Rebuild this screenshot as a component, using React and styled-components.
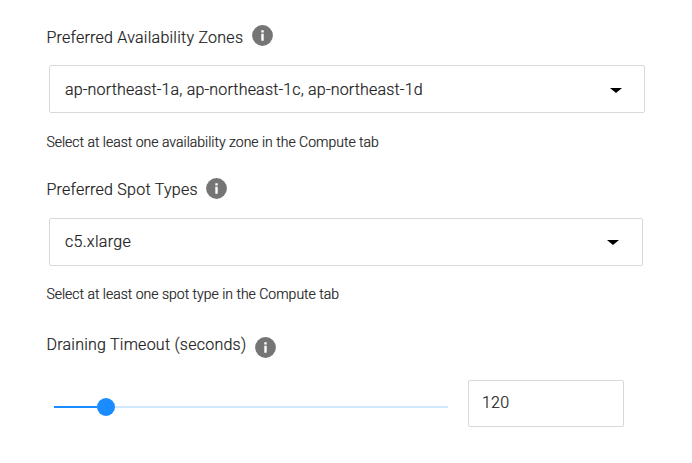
import React, { useState } from "react";
import styled, { createGlobalStyle } from "styled-components";

const GlobalStyle = createGlobalStyle`
  * { box-sizing: border-box; }
  body { margin: 0; background: #fff; }
`;

const Form = styled.main`
  display: flex;
  flex-direction: column;
  width: 692px;
  height: 463px;
  padding: 25px 0 0 46px;
  overflow: hidden;
  background: #fff;
  color: #212121;
  font-family: Roboto, "Liberation Sans", sans-serif;
  font-size: 16px;
  font-weight: 300;
  -webkit-text-stroke: 0.2px #212121;
`;

const Field = styled.section`
  display: flex;
  flex-direction: column;
  height: ${(p) => p.$height}px;
`;

const LabelRow = styled.div`
  display: flex;
  align-items: flex-start;
  justify-content: space-between;
  width: ${(p) => p.$width}px;
  height: 21px;
`;

const Label = styled.label`
  margin-top: ${(p) => p.$drop}px;
  padding-left: 0.4px;
  line-height: 20px;
  letter-spacing: ${(p) => p.$tracking}px;
  white-space: nowrap;
`;

const Icon = styled.svg`
  display: block;
  flex: none;
`;

const Select = styled.button`
  display: flex;
  align-items: center;
  justify-content: space-between;
  width: ${(p) => p.$width}px;
  height: 48px;
  margin: 19px 0 0 3px;
  padding: ${(p) => p.$padding};
  border: 1px solid #d9d9d9;
  border-radius: 2px;
  background: #fff;
  color: inherit;
  font: inherit;
  line-height: 20px;
  letter-spacing: ${(p) => p.$tracking}px;
  text-align: left;
`;

const Hint = styled.p`
  margin: ${(p) => p.$top}px 0 0;
  padding-left: 0.4px;
  font-size: 14px;
  line-height: 20px;
  letter-spacing: ${(p) => p.$tracking}px;
  white-space: nowrap;
`;

const SliderRow = styled.div`
  display: flex;
  align-items: center;
  gap: 20px;
  height: 47px;
  margin: 22px 0 0 8px;
`;

const Slider = styled.div`
  display: flex;
  align-items: center;
  width: 394px;
  height: 18px;
  margin-top: 7px;
`;

const Filled = styled.div`
  height: 2px;
  background: #1a8cff;
`;

const Thumb = styled.div`
  flex: none;
  width: 18px;
  height: 18px;
  border-radius: 50%;
  background: #1a8cff;
`;

const Track = styled.div`
  flex: 1;
  height: 2px;
  background: #d1e8ff;
`;

const NumberInput = styled.input`
  width: 156px;
  height: 47px;
  padding: 0 13px 2px;
  border: 1px solid #d9d9d9;
  border-radius: 2px;
  outline: none;
  background: #fff;
  color: inherit;
  font: inherit;
  letter-spacing: 0.2px;
`;

const InfoIcon = () => (
  <Icon width="21" height="21" viewBox="0 0 21 21">
    <circle cx="10.5" cy="10.5" r="10.4" fill="#757575" />
    <path d="M9.3 5.2h2.4v2.2H9.3zM9.3 8.8h2.4v6.9H9.3z" fill="#fff" />
  </Icon>
);

const Caret = () => (
  <Icon width="12" height="5" viewBox="0 0 12 5">
    <path d="M0 0h12L6 5z" fill="#000" />
  </Icon>
);

const SelectField = ({ label, value, hint, width, height, labelWidth, drop, padding, hintTop, tracking }) => (
  <Field $height={height}>
    <LabelRow $width={labelWidth}>
      <Label $drop={drop} $tracking={tracking[0]}>{label}</Label>
      <InfoIcon />
    </LabelRow>
    <Select type="button" $width={width} $padding={padding} $tracking={tracking[1]}>
      <span>{value}</span>
      <Caret />
    </Select>
    <Hint $top={hintTop} $tracking={tracking[2]}>{hint}</Hint>
  </Field>
);

const MAX_TIMEOUT = 960;

export default function App() {
  const [timeout, setTimeoutValue] = useState("120");
  const filled = Math.min(Number(timeout) || 0, MAX_TIMEOUT) / MAX_TIMEOUT;

  return (
    <>
      <GlobalStyle />
      <Form>
        <SelectField
          label="Preferred Availability Zones"
          value="ap-northeast-1a, ap-northeast-1c, ap-northeast-1d"
          hint="Select at least one availability zone in the Compute tab"
          width={596}
          height={153}
          labelWidth={226.5}
          drop={3}
          padding="2px 22px 0 15px"
          hintTop={19}
          tracking={[0.25, 0.18, 0]}
        />
        <SelectField
          label="Preferred Spot Types"
          value="c5.xlarge"
          hint="Select at least one spot type in the Compute tab"
          width={594}
          height={159}
          labelWidth={180.5}
          drop={2}
          padding="0 23px 0 15px"
          hintTop={18}
          tracking={[0.25, 0.3, 0]}
        />
        <Field $height={90}>
          <LabelRow $width={229.5}>
            <Label $drop={-2} $tracking={0.25}>Draining Timeout (seconds)</Label>
            <InfoIcon />
          </LabelRow>
          <SliderRow>
            <Slider>
              <Filled style={{ width: `${filled * 340}px` }} />
              <Thumb />
              <Track />
            </Slider>
            <NumberInput
              value={timeout}
              onChange={(e) => setTimeoutValue(e.target.value)}
            />
          </SliderRow>
        </Field>
      </Form>
    </>
  );
}
